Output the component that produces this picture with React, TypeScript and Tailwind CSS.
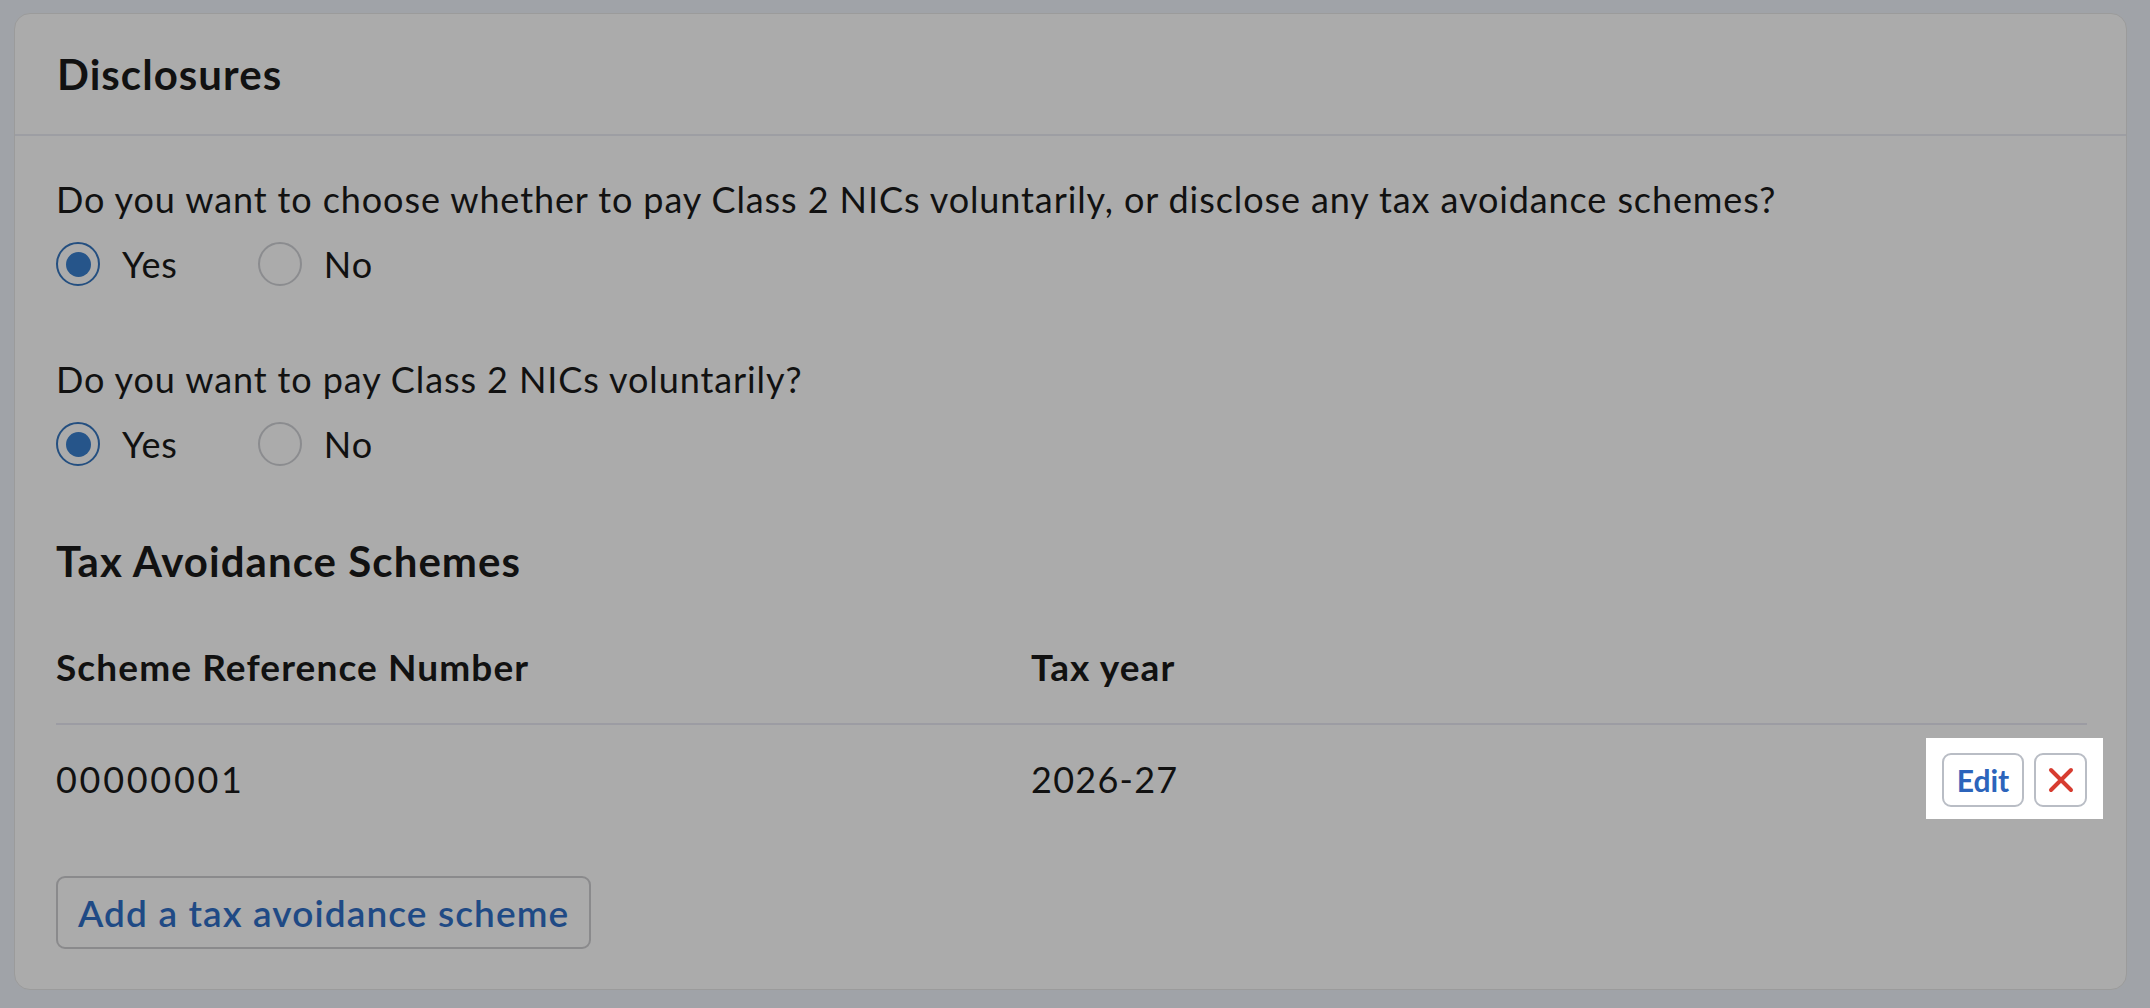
import React from 'react';

const font = { fontFamily: 'Lato, "Noto Sans", sans-serif' };

function Radio({ checked, label }: { checked: boolean; label: string }) {
    return (
        <label className="flex items-center gap-[22px] h-[44px]">
            <span
                className={`w-[44px] h-[44px] rounded-full border-2 flex items-center justify-center shrink-0 ${
                    checked ? 'border-[#244f80]' : 'border-[#8b8c8f]'
                }`}
            >
                {checked && <span className="w-[25px] h-[25px] rounded-full bg-[#26558a]" />}
            </span>
            <span className="text-[36px] leading-[44px] tracking-[0.025em] text-[#111111]">{label}</span>
        </label>
    );
}

function Question({ text, first }: { text: string; first?: boolean }) {
    return (
        <div className={first ? '' : 'mt-[69px]'}>
            <p className="text-[36px] leading-[48px] tracking-[0.025em] text-[#111111]">{text}</p>
            <div className="flex items-center gap-[80px] mt-[19px]">
                <Radio checked label="Yes" />
                <Radio checked={false} label="No" />
            </div>
        </div>
    );
}

export default function App() {
    return (
        <div className="min-h-[1008px] bg-[#a0a3a8] pt-[13px] pl-[14px] pr-[23px]" style={font}>
            <div className="rounded-[16px] border border-[#9b9b9b] bg-[#ababab]">
                <div className="h-[122px] flex items-center px-[42px] border-b-2 border-[#9d9ea3]">
                    <h2 className="text-[42px] leading-[52px] font-bold tracking-[0.025em] text-[#111111]">
                        Disclosures
                    </h2>
                </div>
                <div className="pl-[41px] pr-[39px] pt-[39px] pb-[40px]">
                    <Question
                        first
                        text="Do you want to choose whether to pay Class 2 NICs voluntarily, or disclose any tax avoidance schemes?"
                    />
                    <Question text="Do you want to pay Class 2 NICs voluntarily?" />

                    <h3 className="mt-[69px] text-[42px] leading-[52px] font-bold tracking-[0.025em] text-[#111111]">
                        Tax Avoidance Schemes
                    </h3>

                    <div className="mt-[56px]">
                        <div className="flex pb-[32px] border-b-2 border-[#9c9ca3] text-[37px] leading-[48px] font-bold tracking-[0.03em] text-[#111111]">
                            <div className="w-[975px]">Scheme Reference Number</div>
                            <div>Tax year</div>
                        </div>
                        <div className="flex items-center pt-[13px] text-[36px] leading-[48px] text-[#111111]">
                            <div className="w-[975px] tracking-[0.075em]">00000001</div>
                            <div className="flex-1 tracking-[0.035em]">2026-27</div>
                            <div className="-mr-[16px] bg-white pl-[16px] pr-[16px] pt-[15px] pb-[12px] flex gap-[10px]">
                                <button
                                    type="button"
                                    className="h-[54px] w-[82px] rounded-[9px] border-2 border-[#b9bdc5] bg-white text-[30px] leading-none font-bold text-[#2c64bb]"
                                >
                                    Edit
                                </button>
                                <button
                                    type="button"
                                    aria-label="Delete"
                                    className="h-[54px] w-[53px] rounded-[9px] border-2 border-[#b9bdc5] bg-white flex items-center justify-center"
                                >
                                    <svg viewBox="0 0 26 26" className="w-[26px] h-[26px]" fill="none">
                                        <path
                                            d="M3 3l20 20M23 3L3 23"
                                            stroke="#d73c30"
                                            strokeWidth={4}
                                            strokeLinecap="round"
                                        />
                                    </svg>
                                </button>
                            </div>
                        </div>
                    </div>

                    <button
                        type="button"
                        className="mt-[57px] h-[73px] px-[20px] rounded-[9px] border-2 border-[#8a8a8c] text-[37px] font-semibold tracking-[0.03em] text-[#1f4a85]"
                    >
                        Add a tax avoidance scheme
                    </button>
                </div>
            </div>
        </div>
    );
}
